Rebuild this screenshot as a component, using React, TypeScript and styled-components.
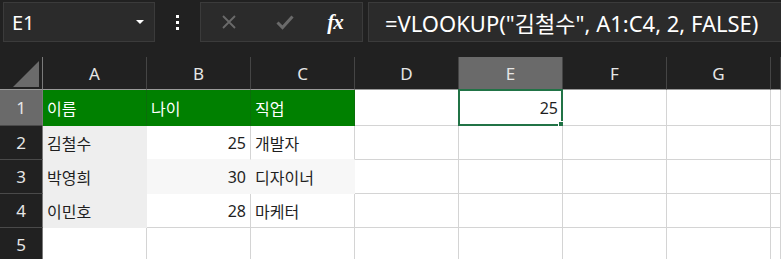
import React from 'react';
import styled, { createGlobalStyle } from 'styled-components';

const GlobalStyle = createGlobalStyle`
  html, body {
    margin: 0;
    padding: 0;
    background: #212121;
  }
  * {
    box-sizing: border-box;
  }
`;

const FONT = `'Noto Sans', 'Noto Sans CJK KR', sans-serif`;

const Screen = styled.div`
  width: 781px;
  height: 259px;
  overflow: hidden;
  background: #212121;
  font-family: ${FONT};
`;

const Toolbar = styled.div`
  display: flex;
  align-items: flex-start;
  height: 57px;
  padding: 2px 0 0 3px;
`;

const Box = styled.div`
  height: 40px;
  background: #2b2b2b;
  border: 1px solid #3b3b3b;
  display: flex;
  align-items: center;
`;

const NameBox = styled(Box)`
  width: 152px;
  padding: 0 10px 0 8px;
  justify-content: space-between;
  color: #ffffff;
  font-size: 20px;
`;

const Caret = styled.span`
  width: 0;
  height: 0;
  border-left: 4px solid transparent;
  border-right: 4px solid transparent;
  border-top: 4px solid #ffffff;
`;

const Dots = styled.div`
  width: 45px;
  height: 40px;
  display: flex;
  flex-direction: column;
  align-items: center;
  justify-content: center;
  gap: 3px;
`;

const Dot = styled.span`
  width: 3px;
  height: 3px;
  background: #ffffff;
`;

const ButtonGroup = styled(Box)`
  width: 163px;
`;

const IconButton = styled.span<{ $width: number; $color?: string }>`
  width: ${p => p.$width}px;
  display: flex;
  justify-content: center;
  color: ${p => p.$color || '#6a6a6a'};
`;

const Fx = styled.span`
  font-family: 'Liberation Serif', serif;
  font-style: italic;
  font-weight: bold;
  font-size: 21px;
  color: #ffffff;
  letter-spacing: -1px;
`;

const FormulaBox = styled(Box)`
  flex: 1;
  margin-left: 5px;
  padding-left: 16px;
  border-right: none;
  color: #ffffff;
  font-size: 22px;
  white-space: nowrap;
  overflow: hidden;
`;

const Sheet = styled.div`
  display: grid;
  grid-template-columns: 43px repeat(7, 104px) 1fr;
  grid-template-rows: 33px 36px repeat(4, 34px);
`;

const Corner = styled.div`
  border-right: 1px solid #7a7a7a;
  border-bottom: 1px solid #9a9a9a;
  display: flex;
  align-items: flex-end;
  justify-content: flex-end;
  padding: 0 3px 2px 0;
`;

const ColHeader = styled.div<{ $selected?: boolean }>`
  background: ${p => (p.$selected ? '#6a6a6a' : '#212121')};
  border-right: 1px solid #454545;
  border-bottom: 1px solid #9a9a9a;
  color: #e6e6e6;
  font-size: 17px;
  display: flex;
  align-items: center;
  justify-content: center;
`;

const RowHeader = styled.div<{ $selected?: boolean }>`
  background: ${p => (p.$selected ? '#6a6a6a' : '#212121')};
  border-right: 1px solid #7a7a7a;
  border-bottom: 1px solid #4a4a4a;
  color: #e6e6e6;
  font-size: 17px;
  display: flex;
  align-items: center;
  justify-content: center;
`;

const Cell = styled.div<{ $fill?: string; $right: string; $bottom: string; $color?: string; $numeric?: boolean }>`
  position: relative;
  background: ${p => p.$fill || '#ffffff'};
  border-right: 1px solid ${p => p.$right};
  border-bottom: 1px solid ${p => p.$bottom};
  color: ${p => p.$color || '#1f1f1f'};
  font-size: 16px;
  display: flex;
  align-items: center;
  justify-content: ${p => (p.$numeric ? 'flex-end' : 'flex-start')};
  padding: 0 4px;
  white-space: nowrap;
`;

const Selection = styled.div`
  position: absolute;
  left: -1px;
  top: -1px;
  right: -1px;
  bottom: -1px;
  border: 2px solid #217346;
  pointer-events: none;
`;

const FillHandle = styled.div`
  position: absolute;
  right: -4px;
  bottom: -4px;
  width: 7px;
  height: 7px;
  background: #217346;
  border: 1px solid #ffffff;
`;

const GREEN = '#008000';
const GRID = '#d4d4d4';

type CellData = { text?: string; fill?: string; color?: string; numeric?: boolean; selected?: boolean };

// the last column is only a sliver at the right edge, its letter is off screen
const columns = ['A', 'B', 'C', 'D', 'E', 'F', 'G', ''];

const head: CellData = { fill: GREEN, color: '#ffffff' };
const nameFill = '#eeeeee';
const bandFill = '#f7f7f7';

const rows: CellData[][] = [
  [
    { ...head, text: '이름' },
    { ...head, text: '나이' },
    { ...head, text: '직업' },
    {},
    { text: '25', numeric: true, selected: true },
    {},
    {},
    {},
  ],
  [{ text: '김철수', fill: nameFill }, { text: '25', numeric: true }, { text: '개발자' }, {}, {}, {}, {}, {}],
  [
    { text: '박영희', fill: nameFill },
    { text: '30', numeric: true, fill: bandFill },
    { text: '디자이너', fill: bandFill },
    {},
    {},
    {},
    {},
    {},
  ],
  [{ text: '이민호', fill: nameFill }, { text: '28', numeric: true }, { text: '마케터' }, {}, {}, {}, {}, {}],
  [{}, {}, {}, {}, {}, {}, {}, {}],
];

const edge = (cell: CellData, next?: CellData) => {
  if (cell.fill === GREEN) return '#0a6f0a';
  if (cell.fill) return cell.fill;
  if (next?.fill && next.fill !== GREEN) return next.fill;
  return GRID;
};

const XIcon = () => (
  <svg width="16" height="16" viewBox="0 0 16 16">
    <path d="M2 2 L14 14 M14 2 L2 14" stroke="currentColor" strokeWidth="1.8" fill="none" />
  </svg>
);

const CheckIcon = () => (
  <svg width="18" height="16" viewBox="0 0 18 16">
    <path d="M1.5 8.5 L6.5 13.5 L16.5 2.5" stroke="currentColor" strokeWidth="3" fill="none" />
  </svg>
);

const App: React.FC = () => {
  return (
    <Screen>
      <GlobalStyle />
      <Toolbar>
        <NameBox>
          <span>E1</span>
          <Caret />
        </NameBox>
        <Dots>
          <Dot />
          <Dot />
          <Dot />
        </Dots>
        <ButtonGroup>
          <IconButton $width={56}>
            <XIcon />
          </IconButton>
          <IconButton $width={56}>
            <CheckIcon />
          </IconButton>
          <IconButton $width={44}>
            <Fx>fx</Fx>
          </IconButton>
        </ButtonGroup>
        <FormulaBox>=VLOOKUP("김철수", A1:C4, 2, FALSE)</FormulaBox>
      </Toolbar>
      <Sheet>
        <Corner>
          <svg width="26" height="26" viewBox="0 0 26 26">
            <polygon points="26,0 26,26 0,26" fill="#6b6b6b" />
          </svg>
        </Corner>
        {columns.map((c, i) => (
          <ColHeader key={i} $selected={c === 'E'}>
            {c}
          </ColHeader>
        ))}
        {rows.map((row, r) => (
          <React.Fragment key={r}>
            <RowHeader $selected={r === 0}>{r + 1}</RowHeader>
            {row.map((cell, c) => (
              <Cell
                key={c}
                $fill={cell.fill}
                $color={cell.color}
                $numeric={cell.numeric}
                $right={edge(cell, row[c + 1])}
                $bottom={cell.fill === GREEN ? GREEN : edge(cell, rows[r + 1]?.[c])}
              >
                {cell.text}
                {cell.selected && (
                  <Selection>
                    <FillHandle />
                  </Selection>
                )}
              </Cell>
            ))}
          </React.Fragment>
        ))}
      </Sheet>
    </Screen>
  );
};

export default App;
